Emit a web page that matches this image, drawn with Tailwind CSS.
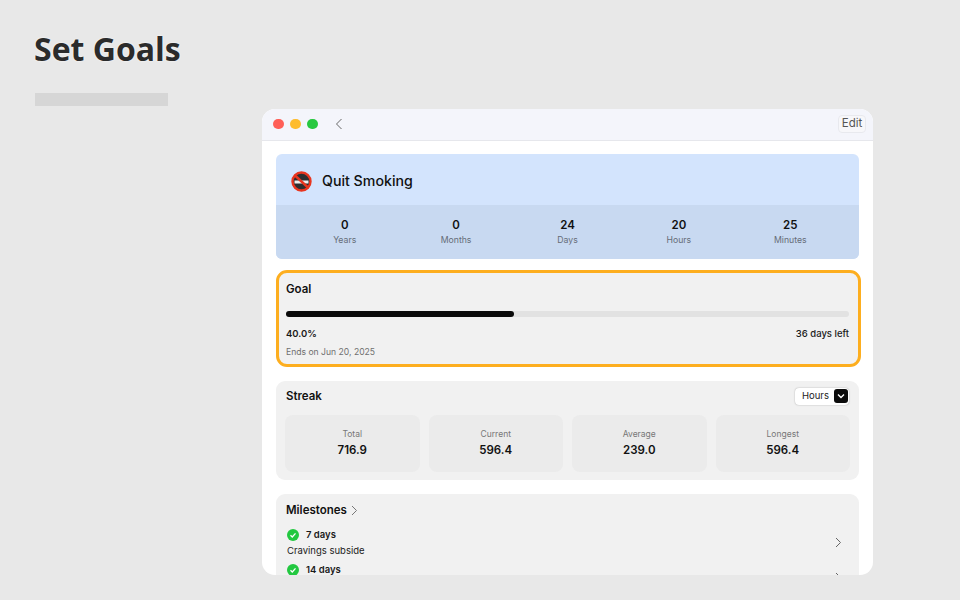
<!DOCTYPE html>
<html lang="en">
  <head>
    <meta charset="UTF-8" />
    <meta name="viewport" content="width=device-width, initial-scale=1.0" />
    <title>Set Goals</title>
    <script src="https://cdn.jsdelivr.net/npm/@tailwindcss/browser@4"></script>
  </head>
  <body class="bg-[#e8e8e8] h-[600px] w-[960px] overflow-hidden font-['Inter',sans-serif]">
    <div class="pl-[34px] pt-[29px]">
      <h1 class="font-['Open_Sans',sans-serif] font-bold text-[32px] leading-[40px] text-[#2b2b2b] [text-shadow:0_0_2px_#fff]">Set Goals</h1>
      <div class="ml-px mt-[24px] w-[133px] h-[13px] bg-[#d6d6d6]"></div>
    </div>

    <div class="ml-[262px] mt-[3px] w-[611px] h-[466px] bg-white rounded-[13px] overflow-hidden">
      <!-- title bar -->
      <div class="h-[32px] bg-[#f4f5fb] border-b border-[#e6e7ec] flex items-center pl-[11px] pr-[7px] pb-px">
        <span class="w-[10.5px] h-[10.5px] rounded-full bg-[#ff5f57]"></span>
        <span class="w-[10.5px] h-[10.5px] rounded-full bg-[#febc2e] ml-[6.5px]"></span>
        <span class="w-[10.5px] h-[10.5px] rounded-full bg-[#28c840] ml-[6.5px]"></span>
        <svg class="ml-[16px]" width="10" height="12" viewBox="0 0 10 12" fill="none" stroke="#666" stroke-width="1"><path d="M7.5 1 2.5 6l5 5" /></svg>
        <span class="ml-auto h-[18px] w-[28px] justify-center flex items-center rounded-[4px] border border-[#e8e9ee] bg-[#f7f7fa] text-[11.5px] text-[#555]">Edit</span>
      </div>

      <div class="pl-[14px] pr-[14px] pt-[13px]">
        <!-- hero -->
        <div class="rounded-[6px] overflow-hidden bg-[#d3e4fd]">
          <div class="h-[51px] flex items-center pl-[15px] pt-[3px]">
            <svg width="21" height="21" viewBox="0 0 21 21">
              <circle cx="10.5" cy="10.5" r="9" fill="#2e2e30" stroke="#e8351f" stroke-width="2.4" />
              <rect x="3.5" y="9.5" width="14" height="3" fill="#eeeeee" />
              <path d="M3.5 4 17.5 17" stroke="#e8351f" stroke-width="2.4" />
            </svg>
            <span class="ml-[10px] text-[14.2px] font-medium text-[#111]">Quit Smoking</span>
          </div>
          <div class="h-[54px] bg-[#c8d9f1] grid grid-cols-5 px-[13px] pt-[12px]">
            <div class="text-center"><div class="text-[11.5px] leading-[16px] font-semibold text-[#111]">0</div><div class="text-[8.7px] leading-[14px] text-[#666d78]">Years</div></div>
            <div class="text-center"><div class="text-[11.5px] leading-[16px] font-semibold text-[#111]">0</div><div class="text-[8.7px] leading-[14px] text-[#666d78]">Months</div></div>
            <div class="text-center"><div class="text-[11.5px] leading-[16px] font-semibold text-[#111]">24</div><div class="text-[8.7px] leading-[14px] text-[#666d78]">Days</div></div>
            <div class="text-center"><div class="text-[11.5px] leading-[16px] font-semibold text-[#111]">20</div><div class="text-[8.7px] leading-[14px] text-[#666d78]">Hours</div></div>
            <div class="text-center"><div class="text-[11.5px] leading-[16px] font-semibold text-[#111]">25</div><div class="text-[8.7px] leading-[14px] text-[#666d78]">Minutes</div></div>
          </div>
        </div>

        <!-- goal -->
        <div class="mt-[11px] w-[585px] h-[97px] rounded-[11px] border-[3px] border-[#fdae1f] bg-[#f1f1f1] pl-[7px] pr-[9px] pt-[9px]">
          <div class="text-[11.5px] leading-[15px] font-semibold text-[#111]">Goal</div>
          <div class="mt-[14px] h-[6px] rounded-full bg-[#e2e2e2]">
            <div class="h-[6px] rounded-full bg-[#0a0a0a] w-[228px]"></div>
          </div>
          <div class="mt-[10px] flex justify-between text-[9.5px] leading-[14px] text-[#1a1a1a]">
            <span class="font-semibold">40.0%</span>
            <span class="font-medium">36 days left</span>
          </div>
          <div class="mt-[4px] text-[8.6px] leading-[14px] text-[#6f6f6f]">Ends on Jun 20, 2025</div>
        </div>

        <!-- streak -->
        <div class="mt-[14px] h-[99px] rounded-[9px] bg-[#f1f1f1] px-[9px]">
          <div class="h-[30px] flex items-center justify-between pl-px mb-[4px]">
            <span class="text-[11.5px] font-semibold text-[#111] mt-[2px]">Streak</span>
            <div class="h-[17px] w-[54px] mr-px rounded-[4px] bg-white shadow-[0_0_1.5px_rgba(0,0,0,0.35)] flex items-center justify-between pl-[7px] pr-[1px] text-[9.5px] text-[#222]">
              Hours
              <span class="w-[14px] h-[14px] rounded-[3px] bg-[#0c0c0c] flex items-center justify-center">
                <svg width="8" height="6" viewBox="0 0 8 6" fill="none" stroke="#fff" stroke-width="1.4"><path d="M1 1.5 4 4.5l3-3" /></svg>
              </span>
            </div>
          </div>
          <div class="grid grid-cols-4 gap-[9px]">
            <div class="h-[57px] rounded-[8px] bg-[#ebebeb] text-center pt-[13px]"><div class="text-[8.5px] leading-[13px] text-[#777]">Total</div><div class="text-[11.5px] leading-[19px] font-semibold text-[#111]">716.9</div></div>
            <div class="h-[57px] rounded-[8px] bg-[#ebebeb] text-center pt-[13px]"><div class="text-[8.5px] leading-[13px] text-[#777]">Current</div><div class="text-[11.5px] leading-[19px] font-semibold text-[#111]">596.4</div></div>
            <div class="h-[57px] rounded-[8px] bg-[#ebebeb] text-center pt-[13px]"><div class="text-[8.5px] leading-[13px] text-[#777]">Average</div><div class="text-[11.5px] leading-[19px] font-semibold text-[#111]">239.0</div></div>
            <div class="h-[57px] rounded-[8px] bg-[#ebebeb] text-center pt-[13px]"><div class="text-[8.5px] leading-[13px] text-[#777]">Longest</div><div class="text-[11.5px] leading-[19px] font-semibold text-[#111]">596.4</div></div>
          </div>
        </div>

        <!-- milestones -->
        <div class="mt-[14px] h-[120px] rounded-[9px] bg-[#f1f1f1] pl-[10px] pr-[9px] pt-[9px]">
          <div class="flex items-center gap-[4px]">
            <span class="text-[11.5px] leading-[15px] font-semibold text-[#111]">Milestones</span>
            <svg width="7" height="11" viewBox="0 0 7 11" fill="none" stroke="#777" stroke-width="1"><path d="M1 1 5.5 5.5 1 10" /></svg>
          </div>
          <div class="mt-[10px] flex justify-between items-center pr-[8px]">
            <div>
              <div class="flex items-center pl-px">
                <svg width="12" height="12" viewBox="0 0 12 12"><circle cx="6" cy="6" r="6" fill="#22c840" /><path d="M3.5 6.2 5.3 8l3.2-3.6" fill="none" stroke="#fff" stroke-width="1.3" /></svg>
                <span class="ml-[7px] text-[9.5px] leading-[14px] font-semibold text-[#1a1a1a]">7 days</span>
              </div>
              <div class="mt-[2px] pl-px text-[9.5px] leading-[14px] text-[#222]">Cravings subside</div>
            </div>
            <svg class="mb-[2px]" width="7" height="11" viewBox="0 0 7 11" fill="none" stroke="#666" stroke-width="1"><path d="M1 1 5.5 5.5 1 10" /></svg>
          </div>
          <div class="mt-[5px] flex justify-between items-start pr-[8px]">
            <div class="flex items-center pl-px">
              <svg width="12" height="12" viewBox="0 0 12 12"><circle cx="6" cy="6" r="6" fill="#22c840" /><path d="M3.5 6.2 5.3 8l3.2-3.6" fill="none" stroke="#fff" stroke-width="1.3" /></svg>
              <span class="ml-[7px] text-[9.5px] leading-[14px] font-semibold text-[#1a1a1a]">14 days</span>
            </div>
            <svg class="mt-[9px]" width="7" height="11" viewBox="0 0 7 11" fill="none" stroke="#666" stroke-width="1"><path d="M1 1 5.5 5.5 1 10" /></svg>
          </div>
        </div>
      </div>
    </div>
  </body>
</html>
